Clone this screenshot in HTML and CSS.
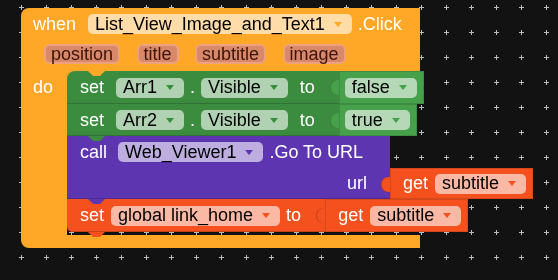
FILE: index.html
```html
<!DOCTYPE html>
<html lang="en">
  <head>
    <meta charset="utf-8">
    <title>List_View_Image_and_Text1.Click</title>
    <link rel="stylesheet" href="styles.css">
  </head>
  <body>
    <svg class="grid" aria-hidden="true">
      <defs>
        <pattern id="crosses" width="25" height="25" patternUnits="userSpaceOnUse">
          <rect x="19" y="7" width="5" height="1" fill="#bdbdbd" />
          <rect x="21" y="5" width="1" height="5" fill="#bdbdbd" />
        </pattern>
      </defs>
      <rect width="100%" height="100%" fill="url(#crosses)" />
    </svg>

    <div class="event">
      <div class="event-head">
        <div class="head-row">
          <span class="kw wide">when</span>
          <span class="field">List_View_Image_and_Text1</span>
          <span class="kw after">.Click</span>
        </div>
        <div class="param-row">
          <span class="param">position</span>
          <span class="param">title</span>
          <span class="param">subtitle</span>
          <span class="param">image</span>
        </div>
      </div>

      <div class="event-body">
        <div class="do">do</div>
        <div class="stack">
          <!-- set Arr1.Visible to false -->
          <div class="stmt first" style="height: 33px">
            <div class="body green">
              <span class="kw wide">set</span>
              <span class="field">Arr1</span>
              <span class="dot">.</span>
              <span class="field">Visible</span>
              <span class="kw to">to</span>
            </div>
            <div class="value logic">
              <span class="field">false</span>
            </div>
          </div>

          <!-- set Arr2.Visible to true -->
          <div class="stmt" style="height: 32px">
            <div class="body green">
              <span class="kw wide">set</span>
              <span class="field">Arr2</span>
              <span class="dot">.</span>
              <span class="field">Visible</span>
              <span class="kw to">to</span>
            </div>
            <div class="value logic">
              <span class="field">true</span>
            </div>
          </div>

          <!-- call Web_Viewer1.GoToUrl -->
          <div class="stmt" style="height: 63px">
            <div class="body purple call-body">
              <div class="line">
                <span class="kw call">call</span>
                <span class="field">Web_Viewer1</span>
                <span class="kw after">.Go To URL</span>
              </div>
              <div class="line end">
                <span class="kw">url</span>
              </div>
            </div>
            <div class="value red get bottom">
              <span class="kw">get</span>
              <span class="field">subtitle</span>
            </div>
          </div>

          <!-- set global link_home to subtitle -->
          <div class="stmt last" style="height: 33px">
            <div class="body red">
              <span class="kw">set</span>
              <span class="field">global link_home</span>
              <span class="kw to near">to</span>
            </div>
            <div class="value red get">
              <span class="kw">get</span>
              <span class="field">subtitle</span>
            </div>
          </div>
        </div>
      </div>
      <div class="event-foot"></div>
    </div>
  </body>
</html>
```

FILE: styles.css
```css
body {
  margin: 0;
  background: #121212;
  font-family: "Liberation Sans", Arial, sans-serif;
  font-size: 18px;
  overflow: hidden;
}

.grid {
  position: fixed;
  top: 0;
  left: 0;
  width: 100%;
  height: 100%;
}

/* event block sits on the workspace canvas */
.event {
  --c: #ffa726;
  position: absolute;
  left: 21px;
  top: 8px;
  width: 399px;
  color: #fff;
}

.event-head {
  background: var(--c);
  border-radius: 8px 0 0 0;
  padding: 6px 0 7px;
}

.head-row {
  display: flex;
  align-items: center;
  height: 20px;
  padding-left: 12px;
}

.param-row {
  display: flex;
  gap: 16.5px;
  height: 20px;
  margin-top: 10px;
  padding-left: 23px;
}

.param {
  display: inline-flex;
  align-items: center;
  box-sizing: border-box;
  height: 20px;
  padding: 0 5px;
  border: 2px solid #eca27f;
  border-radius: 6px;
  background: #d9896a;
  color: #3b130a;
}

.event-body {
  display: flex;
}

.do {
  flex-shrink: 0;
  width: 34px;
  padding-left: 12px;
  background: var(--c);
  line-height: 33px;
}

.stack {
  position: relative;
  flex-shrink: 0;
  display: flex;
  flex-direction: column;
  align-items: flex-start;
  padding-bottom: 3px;
}

/* notch from the event block into the first statement */
.stack::before {
  content: "";
  position: absolute;
  left: 21px;
  top: 0;
  width: 17px;
  height: 5px;
  background: #ffa726;
  clip-path: polygon(0 0, 100% 0, 70% 100%, 30% 100%);
  z-index: 2;
}

.event-foot {
  height: 13px;
  background: var(--c);
  border-radius: 0 0 0 8px;
}

/* statement blocks */
.stmt {
  display: flex;
  align-items: stretch;
}
.stmt > * {
  flex-shrink: 0;
}
.stmt.first {
  background: #ffa726;
}
.stmt.first .body {
  border-top-left-radius: 8px;
}
.stmt.last .body {
  border-bottom-left-radius: 5px;
}

.body {
  position: relative;
  display: flex;
  align-items: center;
  padding: 0 24px 0 13px;
  background: var(--c);
  box-shadow: inset 0 -1px 0 rgba(0, 0, 0, 0.18);
}
.body::after {
  content: "";
  position: absolute;
  left: 21px;
  bottom: -5px;
  width: 17px;
  height: 5px;
  background: var(--c);
  clip-path: polygon(0 0, 100% 0, 70% 100%, 30% 100%);
  z-index: 1;
}

.call-body {
  flex-direction: column;
  align-items: stretch;
  width: 323px;
  box-sizing: border-box;
  padding: 0;
}
.line {
  display: flex;
  align-items: center;
  height: 32px;
  padding-left: 13px;
}
.line.end {
  justify-content: flex-end;
  height: 31px;
  padding-right: 23px;
}

.value {
  position: relative;
  display: flex;
  align-items: center;
  padding: 0 7px 0 6px;
  background: var(--c);
  box-shadow: inset 0 0 0 1px rgba(0, 0, 0, 0.12);
}
.value::before {
  content: "";
  position: absolute;
  left: -9px;
  top: 9px;
  width: 9px;
  height: 15px;
  background: var(--c);
  border-radius: 7px 0 0 7px;
  box-shadow: inset 1px 0 0 rgba(0, 0, 0, 0.2);
}
.value.get {
  padding-left: 13px;
}
.value.bottom {
  align-self: flex-end;
  height: 31px;
}

.green { --c: #3b8c3f; }
.logic { --c: #47a04a; }
.purple { --c: #5e35b1; }
.red { --c: #f4511e; }

/* labels and fields */
.kw {
  white-space: pre;
}
.kw.wide {
  margin-right: 12px;
}
.kw.call {
  margin-right: 11px;
}
.get .kw {
  margin-right: 7px;
}
.body > .kw:first-child {
  margin-right: 7px;
}
.body > .kw.wide:first-child {
  margin-right: 12px;
}
.kw.after {
  margin-left: 6px;
}
.kw.to {
  margin-left: 12px;
}
.kw.to.near {
  margin-left: 6px;
}
.dot {
  margin: 0 6px;
}

.field {
  display: inline-flex;
  align-items: center;
  height: 20px;
  padding: 0 10px 0 7px;
  border-radius: 5px;
  background: rgba(255, 255, 255, 0.6);
  color: #000;
  white-space: pre;
}
.field::after {
  content: "";
  margin-left: 9px;
  border-left: 4px solid transparent;
  border-right: 4px solid transparent;
  border-top: 5px solid var(--c);
}
```
